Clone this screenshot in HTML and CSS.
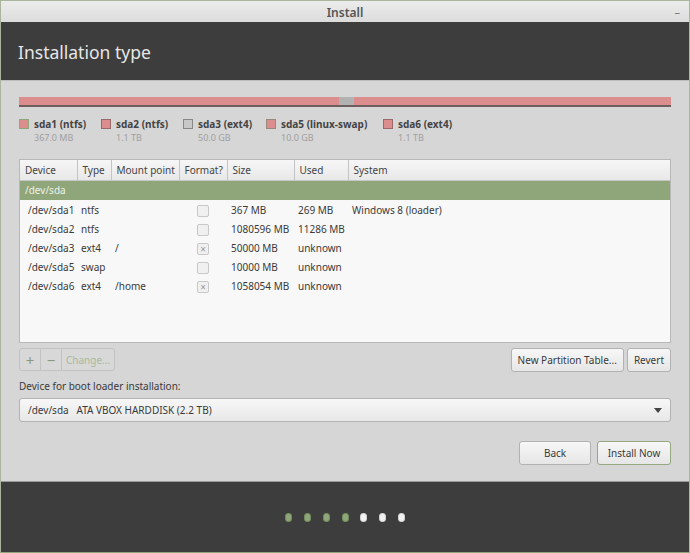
FILE: index.html
```html
<!DOCTYPE html>
<html>
<head>
<meta charset="utf-8">
<link rel="stylesheet" href="styles.css">
</head>
<body>
<div class="window">
  <div class="titlebar">
    <span class="title">Install</span>
    <span class="minimize">–</span>
  </div>
  <div class="header">
    <h1 class="heading">Installation type</h1>
  </div>
  <div class="body">
    <div class="pbar">
      <div class="seg pink" style="width:320px"></div>
      <div class="seg gray" style="width:15px"></div>
      <div class="seg pink" style="width:3px"></div>
      <div class="seg pink" style="width:315px"></div>
    </div>
    <div class="legend">
      <div class="litem w1"><span class="sw sw-green"></span><div><div class="lname">sda1 (ntfs)</div><div class="lsize">367.0 MB</div></div></div>
      <div class="litem w2"><span class="sw sw-pink"></span><div><div class="lname">sda2 (ntfs)</div><div class="lsize">1.1 TB</div></div></div>
      <div class="litem w3"><span class="sw sw-gray"></span><div><div class="lname">sda3 (ext4)</div><div class="lsize">50.0 GB</div></div></div>
      <div class="litem w4"><span class="sw sw-pink2"></span><div><div class="lname">sda5 (linux-swap)</div><div class="lsize">10.0 GB</div></div></div>
      <div class="litem"><span class="sw sw-pink"></span><div><div class="lname">sda6 (ext4)</div><div class="lsize">1.1 TB</div></div></div>
    </div>
    <div class="tablebox">
      <table class="ptable">
        <colgroup>
          <col class="c-dev"><col class="c-type"><col class="c-mount"><col class="c-fmt"><col class="c-size"><col class="c-used"><col>
        </colgroup>
        <thead>
          <tr><th>Device</th><th>Type</th><th>Mount point</th><th>Format?</th><th>Size</th><th>Used</th><th>System</th></tr>
        </thead>
        <tbody>
          <tr class="disk"><td colspan="7">/dev/sda</td></tr>
          <tr><td class="dev">/dev/sda1</td><td>ntfs</td><td></td><td class="fmt"><span class="cb"></span></td><td>367 MB</td><td>269 MB</td><td>Windows 8 (loader)</td></tr>
          <tr><td class="dev">/dev/sda2</td><td>ntfs</td><td></td><td class="fmt"><span class="cb"></span></td><td>1080596 MB</td><td>11286 MB</td><td></td></tr>
          <tr><td class="dev">/dev/sda3</td><td>ext4</td><td class="mnt">/</td><td class="fmt"><span class="cb on">×</span></td><td>50000 MB</td><td>unknown</td><td></td></tr>
          <tr><td class="dev">/dev/sda5</td><td>swap</td><td></td><td class="fmt"><span class="cb"></span></td><td>10000 MB</td><td>unknown</td><td></td></tr>
          <tr><td class="dev">/dev/sda6</td><td>ext4</td><td class="mnt">/home</td><td class="fmt"><span class="cb on">×</span></td><td>1058054 MB</td><td>unknown</td><td></td></tr>
        </tbody>
      </table>
    </div>
    <div class="toolrow">
      <div class="tgroup">
        <span class="tbtn icon">+</span><span class="tbtn icon">−</span><span class="tbtn change">Change...</span>
      </div>
      <div class="rgroup">
        <span class="btn">New Partition Table...</span><span class="btn">Revert</span>
      </div>
    </div>
    <div class="bootlabel">Device for boot loader installation:</div>
    <div class="combo">
      <span>/dev/sda&nbsp;&nbsp;&nbsp;ATA VBOX HARDDISK (2.2 TB)</span>
      <span class="arrow"></span>
    </div>
    <div class="navrow">
      <span class="btn nav">Back</span>
      <span class="btn nav primary">Install Now</span>
    </div>
  </div>
  <div class="footer">
    <span class="dot done"></span><span class="dot done"></span><span class="dot done"></span><span class="dot done"></span><span class="dot"></span><span class="dot"></span><span class="dot"></span>
  </div>
</div>
</body>
</html>
```
FILE: styles.css
```css
* { box-sizing: border-box; }
html, body { margin: 0; padding: 0; }
body {
  font-family: "Noto Sans", "Open Sans", sans-serif;
  font-size: 10px;
  color: #3a3a3a;
  background: #d6d6d6;
}
.window {
  width: 690px;
  height: 553px;
  display: flex;
  flex-direction: column;
  border-left: 1px solid #a9b59c;
  border-right: 1px solid #a9b59c;
  border-bottom: 1px solid #8fa67a;
}
.titlebar {
  height: 22px;
  flex: none;
  background: linear-gradient(#ececec, #dcdcdc);
  border-top: 1px solid #a9b59c;
  display: flex;
  align-items: center;
  justify-content: center;
  position: relative;
}
.title {
  font-size: 12px;
  font-weight: 600;
  color: #555;
  padding-top: 1px;
}
.minimize {
  position: absolute;
  right: 9px;
  top: 3px;
  font-size: 11px;
  color: #777;
}
.header {
  height: 59px;
  flex: none;
  background: #3d3d3d;
  display: flex;
  align-items: center;
  padding-left: 17px;
  border-bottom: 1px solid #bdbdbd;
}
.heading {
  margin: 0;
  font-size: 17.5px;
  font-weight: normal;
  color: #e6e6e6;
  padding-top: 2px;
}
.body {
  flex: 1;
  padding: 16px 18px 0 18px;
  display: flex;
  flex-direction: column;
  background: #d6d6d6;
}
.pbar {
  height: 10px;
  display: flex;
  border-bottom: 2px solid #6e5e5e;
}
.seg { height: 100%; }
.seg.pink { background: #dc8d8d; }
.seg.gray { background: #b2b2b2; }
.legend {
  display: flex;
  margin-top: 10px;
  height: 32px;
}
.litem { display: flex; gap: 5px; }
.w1 { width: 82px; }
.w2 { width: 82px; }
.w3 { width: 83px; }
.w4 { width: 117px; }
.sw {
  width: 10px;
  height: 10px;
  margin-top: 2px;
  border: 1px solid #8a8a8a;
  flex: none;
}
.sw-green { background: #dc8d8d; border-color: #8fa67a; }
.sw-pink { background: #dc8d8d; border-color: #9a6a6a; }
.sw-pink2 { background: #dc8d8d; border-color: #9a8a7a; }
.sw-gray { background: #c8c8c8; border-color: #888; }
.lname { font-weight: bold; color: #444; line-height: 14px; }
.lsize { font-size: 9px; color: #a0a0a0; line-height: 14px; }
.tablebox {
  margin-top: 10px;
  height: 184px;
  background: #f8f8f8;
  border: 1px solid #b8b8b8;
  flex: none;
}
.ptable {
  width: 100%;
  border-collapse: collapse;
  table-layout: fixed;
}
.c-dev { width: 57px; }
.c-type { width: 34px; }
.c-mount { width: 68px; }
.c-fmt { width: 48px; }
.c-size { width: 67px; }
.c-used { width: 54px; }
.ptable th {
  height: 20px;
  font-weight: normal;
  text-align: left;
  padding: 0 5px;
  color: #444;
  background: linear-gradient(#f6f6f6, #e8e8e8);
  border-right: 1px solid #c4c4c4;
  border-bottom: 1px solid #c8c8c8;
  white-space: nowrap;
}
.ptable th:last-child { border-right: none; }
.ptable td {
  height: 19px;
  padding: 0 4px;
  white-space: nowrap;
  color: #3a3a3a;
}
.ptable tr.disk td {
  height: 20px;
  background: #8fa67a;
  color: #eef2ea;
  padding-left: 5px;
}
.ptable td.dev { padding-left: 8px; }
.ptable td.mnt { padding-left: 4px; }
.ptable td.fmt { text-align: center; }
.cb {
  display: inline-block;
  width: 12px;
  height: 12px;
  border: 1px solid #c8c8c8;
  border-radius: 2px;
  background: #f0f0f0;
  vertical-align: middle;
  font-size: 10px;
  line-height: 10px;
  text-align: center;
  color: #999;
}
.toolrow {
  margin-top: 5px;
  display: flex;
  justify-content: space-between;
  height: 24px;
}
.tgroup { display: flex; }
.tbtn {
  height: 23px;
  border: 1px solid #c2c2c2;
  background: #d8d8d8;
  color: #a8b89a;
  display: flex;
  align-items: center;
  justify-content: center;
  margin-right: -1px;
}
.tbtn.icon { width: 22px; font-size: 15px; color: #8a9a7a; }
.tbtn.change { width: 54px; padding: 0 3px; border-radius: 0 3px 3px 0; }
.tbtn:first-child { border-radius: 3px 0 0 3px; }
.rgroup { display: flex; gap: 3px; }
.btn {
  height: 24px;
  padding: 0 6px;
  display: flex;
  align-items: center;
  justify-content: center;
  border: 1px solid #b2b2b2;
  border-radius: 3px;
  background: linear-gradient(#f7f7f7, #e6e6e6);
  color: #3a3a3a;
  white-space: nowrap;
}
.bootlabel {
  margin-top: 7px;
  height: 14px;
  line-height: 14px;
  color: #3a3a3a;
}
.combo {
  margin-top: 5px;
  height: 24px;
  border: 1px solid #b2b2b2;
  border-radius: 3px;
  background: linear-gradient(#f7f7f7, #e8e8e8);
  display: flex;
  align-items: center;
  justify-content: space-between;
  padding: 0 8px 0 8px;
  white-space: pre;
}
.arrow {
  width: 0;
  height: 0;
  border-left: 4px solid transparent;
  border-right: 4px solid transparent;
  border-top: 5px solid #444;
}
.navrow {
  margin-top: 19px;
  display: flex;
  justify-content: flex-end;
  gap: 6px;
}
.btn.nav { height: 24px; }
.btn.nav:first-child { width: 72px; }
.btn.primary { width: 74px; border-color: #94a882; }
.footer {
  height: 71px;
  flex: none;
  background: #3d3d3d;
  display: flex;
  justify-content: center;
  align-items: center;
  gap: 11.7px;
  padding-left: 0px;
  border-top: 1px solid #9a9a9a;
}
.dot {
  width: 7px;
  height: 9px;
  border-radius: 3px;
  background: #f2f2f2;
  border: 1px solid #cfcfcf;
}
.dot.done { background: #8fa67a; border-color: #6f8a5c; }
```
